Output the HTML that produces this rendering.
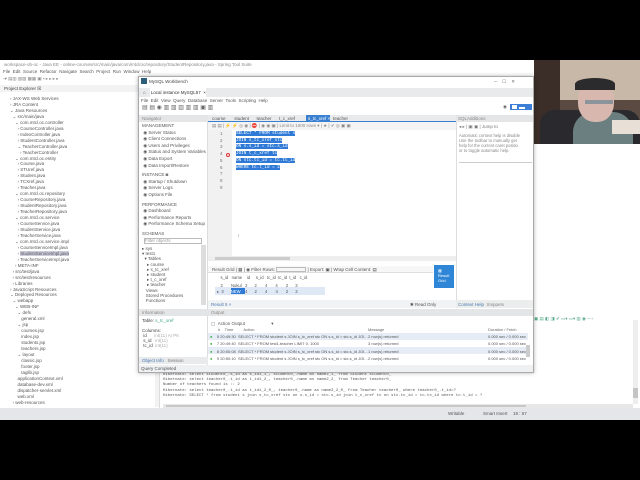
<!DOCTYPE html>
<html><head><meta charset="utf-8">
<style>
*{margin:0;padding:0;box-sizing:border-box}
body{width:640px;height:480px;background:#000;position:relative;overflow:hidden;font-family:"Liberation Sans",sans-serif;font-size:4.5px;color:#333}
.a{position:absolute}
.t{position:absolute;white-space:nowrap;line-height:6px}
.g{height:3px}
</style></head><body>
<div class="a" style="left:0;top:60px;width:640px;height:360px;background:#fff"></div>
<div class="t" style="left:4px;top:62px;color:#888">workspace-ob-oc - Java EE - online-courses/src/main/java/com/mtcl/oc/repository/StudentRepository.java - Spring Tool Suite</div>
<div class="t" style="left:3px;top:69px;color:#555">File &nbsp;Edit &nbsp;Source &nbsp;Refactor &nbsp;Navigate &nbsp;Search &nbsp;Project &nbsp;Run &nbsp;Window &nbsp;Help</div>
<div class="t" style="left:3px;top:76px;color:#888">▫▾ ▤▥ ▧▨ ▩▦ ▣ ▪ ▸ ▸ ▸ ▸</div>
<div class="a" style="left:0;top:85px;width:138px;height:7px;background:#f3f3f3"></div>
<div class="t" style="left:4px;top:86px;color:#444">Project Explorer ☒</div>
<div class="a" style="left:0;top:92px;width:160px;height:316px;background:#fff;border-right:1px solid #ddd"></div>
<div class="t" style="left:10px;top:96px;line-height:5.95px;color:#555">
› JAX-WS Web Services<br>› JRA Content<br>⌄ Java Resources<br>&nbsp;&nbsp;⌄ src/main/java<br>&nbsp;&nbsp;&nbsp;&nbsp;⌄ com.mtcl.oc.controller<br>&nbsp;&nbsp;&nbsp;&nbsp;&nbsp;&nbsp;› CourseController.java<br>&nbsp;&nbsp;&nbsp;&nbsp;&nbsp;&nbsp;› IndexController.java<br>&nbsp;&nbsp;&nbsp;&nbsp;&nbsp;&nbsp;› StudentController.java<br>&nbsp;&nbsp;&nbsp;&nbsp;&nbsp;&nbsp;⌄ TeacherController.java<br>&nbsp;&nbsp;&nbsp;&nbsp;&nbsp;&nbsp;&nbsp;&nbsp;› TeacherController<br>&nbsp;&nbsp;&nbsp;&nbsp;⌄ com.mtcl.oc.entity<br>&nbsp;&nbsp;&nbsp;&nbsp;&nbsp;&nbsp;› Course.java<br>&nbsp;&nbsp;&nbsp;&nbsp;&nbsp;&nbsp;› STUref.java<br>&nbsp;&nbsp;&nbsp;&nbsp;&nbsp;&nbsp;› Student.java<br>&nbsp;&nbsp;&nbsp;&nbsp;&nbsp;&nbsp;› TCXref.java<br>&nbsp;&nbsp;&nbsp;&nbsp;&nbsp;&nbsp;› Teacher.java<br>&nbsp;&nbsp;&nbsp;&nbsp;⌄ com.mtcl.oc.repository<br>&nbsp;&nbsp;&nbsp;&nbsp;&nbsp;&nbsp;› CourseRepository.java<br>&nbsp;&nbsp;&nbsp;&nbsp;&nbsp;&nbsp;› StudentRepository.java<br>&nbsp;&nbsp;&nbsp;&nbsp;&nbsp;&nbsp;› TeacherRepository.java<br>&nbsp;&nbsp;&nbsp;&nbsp;⌄ com.mtcl.oc.service<br>&nbsp;&nbsp;&nbsp;&nbsp;&nbsp;&nbsp;› CourseService.java<br>&nbsp;&nbsp;&nbsp;&nbsp;&nbsp;&nbsp;› StudentService.java<br>&nbsp;&nbsp;&nbsp;&nbsp;&nbsp;&nbsp;› TeacherService.java<br>&nbsp;&nbsp;&nbsp;&nbsp;⌄ com.mtcl.oc.service.impl<br>&nbsp;&nbsp;&nbsp;&nbsp;&nbsp;&nbsp;› CourseServiceImpl.java<br>&nbsp;&nbsp;&nbsp;&nbsp;&nbsp;&nbsp;› <span style="background:#ccd">StudentServiceImpl.java</span><br>&nbsp;&nbsp;&nbsp;&nbsp;&nbsp;&nbsp;› TeacherServiceImpl.java<br>&nbsp;&nbsp;&nbsp;&nbsp;› META-INF<br>&nbsp;&nbsp;› src/test/java<br>&nbsp;&nbsp;› src/test/resources<br>&nbsp;&nbsp;› Libraries<br>› JavaScript Resources<br>⌄ Deployed Resources<br>&nbsp;&nbsp;⌄ webapp<br>&nbsp;&nbsp;&nbsp;&nbsp;⌄ WEB-INF<br>&nbsp;&nbsp;&nbsp;&nbsp;&nbsp;&nbsp;⌄ defs<br>&nbsp;&nbsp;&nbsp;&nbsp;&nbsp;&nbsp;&nbsp;&nbsp;&nbsp;general.xml<br>&nbsp;&nbsp;&nbsp;&nbsp;&nbsp;&nbsp;⌄ jsp<br>&nbsp;&nbsp;&nbsp;&nbsp;&nbsp;&nbsp;&nbsp;&nbsp;&nbsp;courses.jsp<br>&nbsp;&nbsp;&nbsp;&nbsp;&nbsp;&nbsp;&nbsp;&nbsp;&nbsp;index.jsp<br>&nbsp;&nbsp;&nbsp;&nbsp;&nbsp;&nbsp;&nbsp;&nbsp;&nbsp;students.jsp<br>&nbsp;&nbsp;&nbsp;&nbsp;&nbsp;&nbsp;&nbsp;&nbsp;&nbsp;teachers.jsp<br>&nbsp;&nbsp;&nbsp;&nbsp;&nbsp;&nbsp;⌄ layout<br>&nbsp;&nbsp;&nbsp;&nbsp;&nbsp;&nbsp;&nbsp;&nbsp;&nbsp;classic.jsp<br>&nbsp;&nbsp;&nbsp;&nbsp;&nbsp;&nbsp;&nbsp;&nbsp;&nbsp;footer.jsp<br>&nbsp;&nbsp;&nbsp;&nbsp;&nbsp;&nbsp;&nbsp;&nbsp;&nbsp;taglib.jsp<br>&nbsp;&nbsp;&nbsp;&nbsp;&nbsp;&nbsp;applicationContext.xml<br>&nbsp;&nbsp;&nbsp;&nbsp;&nbsp;&nbsp;database-dev.xml<br>&nbsp;&nbsp;&nbsp;&nbsp;&nbsp;&nbsp;dispatcher-servlet.xml<br>&nbsp;&nbsp;&nbsp;&nbsp;&nbsp;&nbsp;web.xml<br>&nbsp;&nbsp;› web-resources</div>
<div class="a" style="left:155px;top:92px;width:4px;height:315px;background:#f2f2f2"></div>
<!-- console -->
<div class="a" style="left:160px;top:372px;width:480px;height:36px;background:#fff"></div>
<div class="t" style="left:163px;top:373px;font-family:'Liberation Mono',monospace;font-size:4px;line-height:5.2px;color:#555">Hibernate: select student0_.s_id as s_id1_1_, student0_.name as name2_1_ from Student student0_<br>Hibernate: select teacher0_.t_id as t_id1_2_, teacher0_.name as name2_2_ from Teacher teacher0_<br>Number of teachers found is :: 2<br>Hibernate: select teacher0_.t_id as t_id1_2_0_, teacher0_.name as name2_2_0_ from Teacher teacher0_ where teacher0_.t_id=?<br>Hibernate: SELECT * from student s join s_tc_xref stc on s.s_id = stc.s_id join t_c_xref tc on stc.tc_id = tc.tc_id where tc.t_id = ?</div>
<div class="a" style="left:163px;top:404px;width:470px;height:4px;background:#e8e8e8"></div>
<div class="a" style="left:166px;top:405px;width:360px;height:2px;background:#c8c8c8"></div>
<div class="a" style="left:633px;top:320px;width:5px;height:84px;background:#eee"></div>
<div class="a" style="left:633px;top:388px;width:5px;height:10px;background:#c4c4c4"></div>
<div class="a" style="left:0;top:408px;width:640px;height:12px;background:#e4e6ea"></div>
<div class="t" style="left:448px;top:411px;color:#555">Writable</div>
<div class="t" style="left:483px;top:411px;color:#555">Smart Insert</div>
<div class="t" style="left:513px;top:411px;color:#555">19 : 57</div>
<div class="t" style="left:534px;top:316px;color:#5a8">▣ ▤ ◧ ◨ ✔ ▭▾ ▭▾ ▥ ◉ ─ ▫</div>
<!-- webcam -->
<div class="a" style="left:534px;top:60px;width:106px;height:84px;background:#5a4a42"></div>
<div class="a" style="left:534px;top:60px;width:26px;height:84px;background:#3b2d28"></div>
<div class="a" style="left:560px;top:60px;width:80px;height:40px;background:#c8b8a8"></div>
<div class="a" style="left:540px;top:110px;width:100px;height:34px;background:#2a2a2e;border-radius:14px 14px 0 0"></div>
<div class="a" style="left:573px;top:112px;width:60px;height:32px;background:#6c7f80;border-radius:20px 20px 0 0"></div>
<div class="a" style="left:578px;top:80px;width:36px;height:42px;background:#d8b8ae;border-radius:45%"></div>
<div class="a" style="left:575px;top:78px;width:40px;height:12px;background:#2b2a2c;border-radius:50% 50% 0 0"></div>
<div class="a" style="left:585px;top:100px;width:28px;height:4px;background:#8b949a"></div>
<div class="a" style="left:612px;top:120px;width:28px;height:14px;background:#e8e0d6"></div>
<!-- mysql workbench window -->
<div class="a" style="left:138px;top:76px;width:396px;height:297px;background:#fff;border:1px solid #aaa;box-shadow:0 0 4px rgba(0,0,0,.3)"></div>
<div class="t" style="left:149px;top:79px;color:#444">MySQL Workbench</div>
<div class="a" style="left:141px;top:78px;width:6px;height:6px;background:#2d5e7a"></div>
<div class="t" style="left:494px;top:79px;color:#666">─ &nbsp;&nbsp; ☐ &nbsp;&nbsp; ✕</div>
<div class="a" style="left:139px;top:88px;width:394px;height:9px;background:#e9eaec"></div>
<div class="a" style="left:150px;top:88px;width:56px;height:9px;background:#fff"></div>
<div class="t" style="left:143px;top:90px;color:#333">⌂ &nbsp;&nbsp;&nbsp;Local instance MySQL57 &nbsp;×</div>
<div class="t" style="left:141px;top:98px;color:#555">File &nbsp;Edit &nbsp;View &nbsp;Query &nbsp;Database &nbsp;Server &nbsp;Tools &nbsp;Scripting &nbsp;Help</div>
<div class="t" style="left:142px;top:105px;color:#666;font-size:6px">▤ ▤ ◉ ▥ ▥ ▥ ▥ ▥ ▣ ▥</div>
<div class="t" style="left:503px;top:104px;color:#666">◉</div>
<div class="a" style="left:510px;top:104px;width:22px;height:6px;background:#3d7fd6"></div>
<div class="a" style="left:512px;top:105px;width:5px;height:4px;background:#fff"></div>
<div class="a" style="left:519px;top:107px;width:6px;height:2px;background:#fff"></div>
<!-- navigator -->
<div class="a" style="left:139px;top:115px;width:69px;height:250px;background:#fff;border-right:1px solid #ddd"></div>
<div class="a" style="left:139px;top:115px;width:69px;height:7px;background:#e4e5e7"></div>
<div class="t" style="left:142px;top:116px;color:#888">Navigator</div>
<div class="t" style="left:142px;top:123px;color:#555;line-height:6.6px"><div>MANAGEMENT</div><div>&nbsp;◉ Server Status</div><div>&nbsp;◉ Client Connections</div><div>&nbsp;◉ Users and Privileges</div><div>&nbsp;◉ Status and System Variables</div><div>&nbsp;◉ Data Export</div><div>&nbsp;◉ Data Import/Restore</div><div class="g"></div><div>INSTANCE ◙</div><div>&nbsp;◉ Startup / Shutdown</div><div>&nbsp;◉ Server Logs</div><div>&nbsp;◉ Options File</div><div class="g"></div><div>PERFORMANCE</div><div>&nbsp;◉ Dashboard</div><div>&nbsp;◉ Performance Reports</div><div>&nbsp;◉ Performance Schema Setup</div><div class="g"></div><div>SCHEMAS</div></div>
<div class="a" style="left:144px;top:238px;width:58px;height:6px;border:1px solid #bbb;background:#fff"></div>
<div class="t" style="left:145px;top:238px;color:#999">Filter objects</div>
<div class="t" style="left:142px;top:246px;color:#555;line-height:5.2px">▸ sys<br>▾ test1<br>&nbsp;&nbsp;▾ Tables<br>&nbsp;&nbsp;&nbsp;&nbsp;▸ course<br>&nbsp;&nbsp;&nbsp;&nbsp;▸ s_tc_xref<br>&nbsp;&nbsp;&nbsp;&nbsp;▸ student<br>&nbsp;&nbsp;&nbsp;&nbsp;▸ t_c_xref<br>&nbsp;&nbsp;&nbsp;&nbsp;▸ teacher<br>&nbsp;&nbsp;&nbsp;Views<br>&nbsp;&nbsp;&nbsp;Stored Procedures<br>&nbsp;&nbsp;&nbsp;Functions</div>
<div class="a" style="left:201px;top:245px;width:5px;height:60px;background:#ddd"></div>
<div class="a" style="left:139px;top:309px;width:69px;height:7px;background:#e4e5e7"></div>
<div class="t" style="left:142px;top:310px;color:#888">Information</div>
<div class="t" style="left:142px;top:318px;color:#444;line-height:5px">Table: <span style="color:#4a8">s_tc_xref</span><br><br>Columns:<br>&nbsp;id &nbsp;&nbsp;&nbsp;&nbsp;&nbsp;<span style="color:#aaa">int(11) AI PK</span><br>&nbsp;s_id &nbsp;&nbsp;<span style="color:#aaa">int(11)</span><br>&nbsp;tc_id &nbsp;<span style="color:#aaa">int(11)</span></div>
<div class="a" style="left:139px;top:357px;width:69px;height:7px;background:#e9eaec"></div>
<div class="t" style="left:142px;top:358px;color:#4a7ab0">Object Info &nbsp;&nbsp;<span style="color:#777">Session</span></div>
<div class="a" style="left:139px;top:365px;width:394px;height:7px;background:#eef0f2"></div>
<div class="t" style="left:141px;top:366px;color:#555">Query Completed</div>
<!-- editor -->
<div class="a" style="left:208px;top:115px;width:248px;height:7px;background:#e9eaec;border-bottom:1px solid #3a80d0"></div>
<div class="t" style="left:212px;top:116px;color:#555">course &nbsp;&nbsp;&nbsp;&nbsp;&nbsp;&nbsp;student &nbsp;&nbsp;&nbsp;&nbsp;&nbsp;teacher &nbsp;&nbsp;&nbsp;&nbsp;&nbsp;t_c_xref</div>
<div class="a" style="left:306px;top:115px;width:24px;height:7px;background:#3a80d0"></div>
<div class="t" style="left:308px;top:116px;color:#fff">s_tc_xref ×</div>
<div class="t" style="left:333px;top:116px;color:#555">teacher</div>
<div class="a" style="left:208px;top:122px;width:248px;height:8px;background:#f4f4f5"></div>
<div class="t" style="left:212px;top:123px;color:#888">▤ ▤ | ⚡ ⚡ ◎ ◉ | ⛔ | ◉ ◉ ▣ | Limit to 1000 rows ▾ | ★ | ✔ ◎ ▣ ▣</div>
<div class="a" style="left:208px;top:130px;width:24px;height:126px;background:#f1f1f1"></div>
<div class="t" style="left:220px;top:131px;color:#777;line-height:6.7px">1<br>2<br>3<br>4<br>5<br>6<br>7<br>8<br>9</div>
<div class="a" style="left:226px;top:153px;width:4px;height:4px;border:1px solid #d33;border-radius:50%"></div>
<div class="t" style="left:236px;top:131px;font-family:'Liberation Mono',monospace;font-size:4.3px;line-height:6.7px;color:#fff"><span style="background:#2f7ad6">SELECT * FROM student s </span><br><span style="background:#2f7ad6">JOIN s_tc_xref stc </span><br><span style="background:#2f7ad6">ON s.s_id = stc.s_id </span><br><span style="background:#2f7ad6">JOIN t_c_xref tc </span><br><span style="background:#2f7ad6">ON stc.tc_id = tc.tc_id </span><br><span style="background:#2f7ad6">WHERE tc.t_id = 2</span></div>
<div class="t" style="left:238px;top:233px;color:#999">I</div>
<div class="a" style="left:208px;top:256px;width:248px;height:5px;background:#eee"></div>
<div class="a" style="left:215px;top:257px;width:75px;height:3px;background:#ccc"></div>
<!-- result grid -->
<div class="a" style="left:208px;top:266px;width:225px;height:7px;background:#f7f7f7;border-bottom:1px solid #ddd"></div>
<div class="t" style="left:212px;top:267px;color:#555">Result Grid | ▦ | ◉ Filter Rows: <span style="display:inline-block;width:30px;height:5px;border:1px solid #bbb;vertical-align:middle"></span> | Export: ▣ | Wrap Cell Content: ▤</div>
<div class="t" style="left:217px;top:274px;color:#555;line-height:7.5px;font-size:4.2px">&nbsp;&nbsp;&nbsp;s_id &nbsp;&nbsp;name &nbsp;&nbsp;&nbsp;id &nbsp;&nbsp;&nbsp;&nbsp;s_id &nbsp;&nbsp;tc_id &nbsp;tc_id &nbsp;t_id &nbsp;&nbsp;c_id<br>&nbsp;&nbsp;&nbsp;2 &nbsp;&nbsp;&nbsp;&nbsp;&nbsp;&nbsp;Nukul &nbsp;&nbsp;2 &nbsp;&nbsp;&nbsp;&nbsp;&nbsp;2 &nbsp;&nbsp;&nbsp;&nbsp;&nbsp;&nbsp;4 &nbsp;&nbsp;&nbsp;&nbsp;&nbsp;&nbsp;4 &nbsp;&nbsp;&nbsp;&nbsp;&nbsp;&nbsp;2 &nbsp;&nbsp;&nbsp;&nbsp;&nbsp;3</div>
<div class="a" style="left:215px;top:287px;width:110px;height:8px;background:#dfe9f6"></div>
<div class="a" style="left:231px;top:288px;width:14px;height:6px;background:#2f7ad6"></div>
<div class="t" style="left:217px;top:289px;color:#555;font-size:4.2px">▸&nbsp;&nbsp;3 &nbsp;&nbsp;&nbsp;&nbsp;&nbsp;<span style="color:#fff">NEW</span> &nbsp;&nbsp;&nbsp;4 &nbsp;&nbsp;&nbsp;&nbsp;&nbsp;2 &nbsp;&nbsp;&nbsp;&nbsp;&nbsp;&nbsp;4 &nbsp;&nbsp;&nbsp;&nbsp;&nbsp;&nbsp;4 &nbsp;&nbsp;&nbsp;&nbsp;&nbsp;&nbsp;2 &nbsp;&nbsp;&nbsp;&nbsp;&nbsp;3</div>
<div class="a" style="left:434px;top:265px;width:20px;height:23px;background:#2f86d6"></div>
<div class="t" style="left:438px;top:268px;color:#fff;font-size:4px;line-height:5px">▦<br>Result<br>Grid</div>
<div class="a" style="left:208px;top:300px;width:248px;height:8px;background:#f2f3f4"></div>
<div class="t" style="left:211px;top:302px;color:#4a7ab0">Result 5 ×</div>
<div class="t" style="left:410px;top:302px;color:#555">✱ Read Only</div>
<!-- sql additions -->
<div class="a" style="left:456px;top:115px;width:77px;height:193px;background:#fff;border-left:1px solid #ddd"></div>
<div class="a" style="left:456px;top:115px;width:77px;height:7px;background:#e4e5e7"></div>
<div class="t" style="left:458px;top:116px;color:#888">SQLAdditions</div>
<div class="t" style="left:459px;top:124px;color:#777">◂ ▸ | ▣ ▣ | Jump to</div>
<div class="t" style="left:459px;top:133px;color:#888;font-size:4.2px;line-height:5px">Automatic context help is disable<br>Use the toolbar to manually get<br>help for the current caret positio<br>or to toggle automatic help.</div>
<div class="a" style="left:459px;top:162px;width:73px;height:1px;background:#ccc"></div>
<div class="a" style="left:456px;top:300px;width:77px;height:8px;background:#eceded"></div>
<div class="t" style="left:458px;top:302px;color:#4a7ab0">Context Help &nbsp;<span style="color:#888">Snippets</span></div>
<!-- output -->
<div class="a" style="left:208px;top:309px;width:325px;height:7px;background:#e4e5e7"></div>
<div class="t" style="left:211px;top:310px;color:#888">Output</div>
<div class="t" style="left:211px;top:321px;color:#555">▢ &nbsp;Action Output &nbsp;&nbsp;&nbsp;&nbsp;&nbsp;&nbsp;&nbsp;&nbsp;&nbsp;&nbsp;&nbsp;&nbsp;&nbsp;&nbsp;&nbsp;&nbsp;&nbsp;&nbsp;&nbsp;&nbsp;▾</div>
<div class="t" style="left:218px;top:327px;color:#666;font-size:4px">#&nbsp;&nbsp;&nbsp;&nbsp;Time &nbsp;&nbsp;&nbsp;&nbsp;&nbsp;&nbsp;&nbsp;&nbsp;Action</div>
<div class="t" style="left:368px;top:327px;color:#666;font-size:4px">Message</div>
<div class="t" style="left:488px;top:327px;color:#666;font-size:4px">Duration / Fetch</div>
<div class="a" style="left:208px;top:333px;width:320px;height:7px;background:#e5ecf5"></div>
<div class="a" style="left:208px;top:347px;width:320px;height:7px;background:#e5ecf5"></div>
<div class="t" style="left:210px;top:333px;color:#555;font-size:4px;line-height:7.3px"><span style="color:#3a3">●</span>&nbsp;&nbsp;&nbsp;&nbsp;5 20:49:30 &nbsp;SELECT * FROM student s JOIN s_tc_xref stc ON s.s_id = stc.s_id JOI...<br><span style="color:#3a3">●</span>&nbsp;&nbsp;&nbsp;&nbsp;7 20:49:40 &nbsp;SELECT * FROM test1.teacher LIMIT 0, 1000<br><span style="color:#3a3">●</span>&nbsp;&nbsp;&nbsp;&nbsp;8 20:50:08 &nbsp;SELECT * FROM student s JOIN s_tc_xref stc ON s.s_id = stc.s_id JOI...<br><span style="color:#3a3">●</span>&nbsp;&nbsp;&nbsp;&nbsp;9 20:50:10 &nbsp;SELECT * FROM student s JOIN s_tc_xref stc ON s.s_id = stc.s_id JOI...</div>
<div class="t" style="left:368px;top:333px;color:#555;font-size:4px;line-height:7.3px">2 row(s) returned<br>3 row(s) returned<br>1 row(s) returned<br>2 row(s) returned</div>
<div class="t" style="left:488px;top:333px;color:#555;font-size:4px;line-height:7.3px">0.000 sec / 0.000 sec<br>0.000 sec / 0.000 sec<br>0.000 sec / 0.000 sec<br>0.000 sec / 0.000 sec</div>
<div class="a" style="left:526px;top:345px;width:4px;height:12px;background:#ccc"></div>
</body></html>
